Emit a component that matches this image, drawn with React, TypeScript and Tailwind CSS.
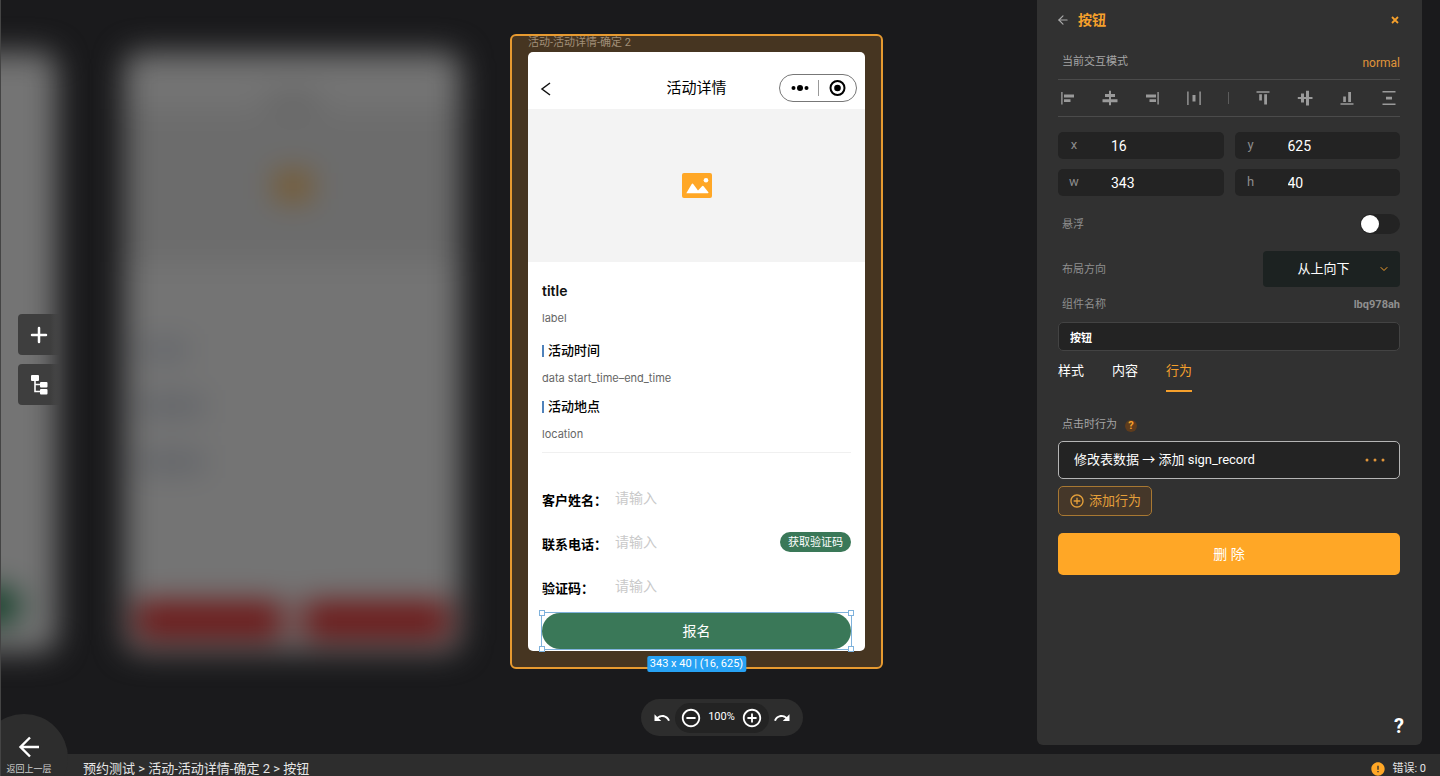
import React, { useState } from "react";
import { MdAddCircleOutline, MdError, MdRedo, MdRemoveCircleOutline, MdUndo } from "react-icons/md";
import { ArrowLeft, ChevronDown, Plus } from "lucide-react";

type AlignAction = { label: string; path: string };

const horizontalActions: AlignAction[] = [
  { label: "左对齐", path: "M1.200 2h1.400v12.500h-1.400zM4 4.500h10v3H4zM4 9.300h6.500v2.700H4z" },
  { label: "水平居中", path: "M7 .8h2V4h4v3H9v2.300h6.500v3H9v3H7v-3H.5v-3H7V7H3V4h4z" },
  { label: "右对齐", path: "M13.400 2h1.400v12.500h-1.400zM2 4.500h10v3H2zM5.500 9.300H12v2.700H5.500z" },
  { label: "水平分布", path: "M1.200 1.500h1.400v13.500h-1.400zM13.400 1.500h1.400v13.500h-1.400zM6.500 5h3v6.500h-3z" },
];

const verticalActions: AlignAction[] = [
  { label: "顶部对齐", path: "M1.500 1.200h13v1.500h-13zM4.200 4.200h2.700v6.300H4.200zM9.200 4.200H12V14.500H9.200z" },
  { label: "垂直居中", path: "M4 3.500h3V7h2V.8h3V7h3.500v2H12v6.500H9V9H7v3.500H4V9H.8V7H4z" },
  { label: "底部对齐", path: "M1.500 13.300h13v1.500h-13zM4.200 6.500h2.700V12H4.200zM9.200 2H12v10H9.200z" },
  { label: "垂直分布", path: "M1.500 1h13v1.500h-13zM1.500 13.500h13V15h-13zM5 6.700h6v2.700H5z" },
];

const tabs = ["样式", "内容", "行为"];

function TreeIcon() {
  return (
    <svg viewBox="0 0 18 20" className="h-5 w-[18px]" fill="none">
      <rect x="1" y="0" width="8" height="6" rx="1" fill="#fff" />
      <rect x="10" y="7" width="7.500" height="5.500" rx="1" fill="#fff" />
      <rect x="10" y="14" width="7.500" height="5.500" rx="1" fill="#fff" />
      <path d="M5 5v11.500h6M5 9.500h6" stroke="#fff" strokeWidth="1.600" />
    </svg>
  );
}

function PictureIcon() {
  return (
    <svg viewBox="0 0 30 25" className="h-[25px] w-[30px]">
      <rect width="30" height="25" rx="2" fill="#ffa726" />
      <circle cx="24" cy="7.300" r="2.300" fill="#fff" />
      <path
        d="M4.300 20.200L9.600 11.200q.9-1.300 1.800 0L16 17.400l4-4.200q.8-.8 1.600.1l4.800 6q.3 1-.6 1H5q-.8 0-.7-.1z"
        fill="#fff"
      />
    </svg>
  );
}

/* Out-of-focus neighbours of the selected artboard */
function BlurredBoard() {
  return (
    <div className="flex h-[600px] w-[337px] flex-col overflow-hidden rounded-2xl bg-[#747474]">
      <div className="flex h-[57px] items-end justify-center bg-[#747474]">
        <span className="h-4 w-14 rounded-full bg-[#646464]" />
      </div>
      <div className="flex h-[153px] items-center justify-center bg-[#6c6c6c]">
        <span className="h-7 w-9 bg-[#79592a]" />
      </div>
      <div className="flex flex-col gap-10 px-4 pt-20">
        <span className="h-4 w-12 bg-[#5f6268]" />
        <span className="h-4 w-16 bg-[#5c5f65]" />
        <span className="h-4 w-16 bg-[#5c5f65]" />
      </div>
      <div className="mt-auto flex gap-5 px-3 pb-3.5">
        <span className="h-9 flex-1 rounded bg-[#6c1414]" />
        <span className="h-9 flex-1 rounded bg-[#6c1414]" />
      </div>
    </div>
  );
}

function BlurredBoardEdge() {
  return (
    <div className="flex h-[600px] w-[337px] flex-col justify-end overflow-hidden rounded-2xl bg-[#747474] pr-9 pb-7 pl-3">
      <span className="h-9 rounded-full bg-[#123f28]" />
    </div>
  );
}

function SectionHeading({ children }: { children: React.ReactNode }) {
  return (
    <h3 className="flex h-[18px] items-center gap-1 text-[13px] font-medium text-black">
      <span className="h-3 w-0.5 bg-[#4f82bb]" />
      {children}
    </h3>
  );
}

function FormRow({ id, label, action }: { id: string; label: string; action?: string }) {
  return (
    <div className="flex h-11 items-center">
      <label htmlFor={id} className="w-[73px] shrink-0 pt-1 text-[13px] font-bold text-black">
        {label}
      </label>
      <input
        id={id}
        placeholder="请输入"
        className="min-w-0 flex-1 bg-transparent pb-0.5 text-sm text-black outline-none placeholder:text-[#c9c9c9]"
      />
      {action && (
        <button className="mb-0.5 h-5 rounded-full bg-[#3a7858] px-2 text-[11px] leading-5 text-white">
          {action}
        </button>
      )}
    </div>
  );
}

function Handle({ className }: { className: string }) {
  return <span className={`absolute size-1.5 border border-[#7fb2dc] bg-white ${className}`} />;
}

function SelectedBoard() {
  return (
    <section className="w-[373px] rounded-md border-2 border-[#e79a30] bg-[#463521] px-4 pb-4">
      <h2 className="h-4 text-[11px] leading-[14px] text-[#a18f78]">活动-活动详情-确定 2</h2>
      <div className="rounded-[5px] bg-white font-['Inter','Noto_Sans_CJK_SC',sans-serif]">
        <header className="grid h-[57px] grid-cols-3 items-center pt-4">
          <button aria-label="返回" className="pl-3">
            <svg viewBox="0 0 12 14" className="h-3.5 w-3" fill="none">
              <path d="M10 1L2 7l8 6" stroke="#111" strokeWidth="1.500" />
            </svg>
          </button>
          <h1 className="text-center text-[15px] text-black">活动详情</h1>
          <div className="mr-2 mb-0.5 flex h-7 w-[78px] items-center justify-center justify-self-end rounded-full border border-[#777]">
            <svg viewBox="0 0 60 20" className="h-5 w-[60px]">
              <circle cx="5.500" cy="10" r="2" />
              <circle cx="12" cy="10" r="3" />
              <circle cx="18.500" cy="10" r="2" />
              <path d="M30.500 2v16" stroke="#999" />
              <circle cx="49.500" cy="10" r="7" fill="none" stroke="#000" strokeWidth="2" />
              <circle cx="49.500" cy="10" r="3.300" />
            </svg>
          </div>
        </header>
        <div className="flex h-[153px] items-center justify-center bg-[#f3f3f3]">
          <PictureIcon />
        </div>
        <div className="flex flex-col px-3.5 pt-5">
          <h2 className="h-[18px] text-sm leading-[18px] font-semibold text-[#111]">title</h2>
          <p className="mt-2.5 mb-4 h-4 text-[11px] leading-4 text-[#666]">label</p>
          <SectionHeading>活动时间</SectionHeading>
          <p className="mt-2.5 mb-3 h-4 text-[11px] leading-4 text-[#666]">data start_time–end_time</p>
          <SectionHeading>活动地点</SectionHeading>
          <p className="mt-2.5 mb-2.5 h-4 text-[11px] leading-4 text-[#666]">location</p>
          <hr className="mb-6 border-[#f0f0f0]" />
          <FormRow id="guest-name" label="客户姓名：" />
          <FormRow id="phone" label="联系电话：" action="获取验证码" />
          <FormRow id="code" label="验证码：" />
          <div className="relative mt-1 mb-0.5 flex outline-1 outline-[#7fb2dc]">
            <button className="h-9 flex-1 rounded-full bg-[#3a7858] text-sm text-white">报名</button>
            <Handle className="-top-[3px] -left-[3px]" />
            <Handle className="-top-[3px] -right-[3px]" />
            <Handle className="-bottom-[3px] -left-[3px]" />
            <Handle className="-right-[3px] -bottom-[3px]" />
            <span className="absolute top-full left-1/2 mt-[7px] h-4 -translate-x-1/2 rounded-xs bg-[#27a2f4] px-[3px] font-[Roboto] text-[11px] leading-4 whitespace-nowrap text-white">
              343 x 40 | (16, 625)
            </span>
          </div>
        </div>
      </div>
    </section>
  );
}

function NumberField({ name, value }: { name: string; value: string }) {
  return (
    <label className="flex h-[27px] items-center rounded-[5px] bg-[#232323] text-sm text-white">
      <span className="w-8 shrink-0 text-center text-[13px] text-[#8c8c8c]">{name}</span>
      <input defaultValue={value} className="ml-[21px] w-0 min-w-0 flex-1 bg-transparent outline-none" />
    </label>
  );
}

function AlignButtons({ items }: { items: AlignAction[] }) {
  return (
    <>
      {items.map(({ label, path }) => (
        <button key={label} aria-label={label}>
          <svg viewBox="0 0 16 16" className="size-4" fill="currentColor">
            <path d={path} />
          </svg>
        </button>
      ))}
    </>
  );
}

function Inspector() {
  const [tab, setTab] = useState("行为");
  return (
    <aside className="z-10 mr-[18px] mb-[9px] flex w-[385px] shrink-0 flex-col rounded-b-md bg-[#313131] pr-[22px] pl-[21px] text-white">
      <header className="flex h-10 items-center">
        <button aria-label="返回" className="-ml-0.5">
          <ArrowLeft className="size-3.5 text-[#aaa]" />
        </button>
        <h2 className="ml-2 text-sm font-bold text-[#f5a02c]">按钮</h2>
        <button aria-label="关闭" className="ml-auto">
          <svg viewBox="0 0 10 10" className="size-2.5" stroke="#f5a02c" strokeWidth="1.800">
            <path d="M2 2l6 6M8 2L2 8" />
          </svg>
        </button>
      </header>
      <div className="flex h-10 items-center justify-between border-b border-[#4b4b4b] pt-1.5 pl-1">
        <span className="text-[11px] text-[#a5a5a5]">当前交互模式</span>
        <span className="text-xs text-[#e0953a]">normal</span>
      </div>
      <div className="flex h-[37px] items-center justify-between border-b border-[#4b4b4b] pr-[3px] pl-0.5 text-[#9a9a9a]">
        <AlignButtons items={horizontalActions} />
        <span className="h-3 w-px bg-[#5c5c5c]" />
        <AlignButtons items={verticalActions} />
      </div>
      <div className="mt-[15px] grid grid-cols-2 gap-x-[11px] gap-y-2.5">
        <NumberField name="x" value="16" />
        <NumberField name="y" value="625" />
        <NumberField name="w" value="343" />
        <NumberField name="h" value="40" />
      </div>
      <div className="mt-3.5 flex h-7 items-center justify-between pl-1">
        <label htmlFor="floating" className="pt-0.5 text-[11px] text-[#8f8f8f]">
          悬浮
        </label>
        <input
          id="floating"
          type="checkbox"
          className="flex h-5 w-10 appearance-none items-center rounded-full bg-[#232323] px-px before:size-[18px] before:rounded-full before:bg-white checked:justify-end"
        />
      </div>
      <div className="mt-[13px] flex h-9 items-center justify-between pl-1">
        <label htmlFor="direction" className="pt-0.5 text-[11px] text-[#8f8f8f]">
          布局方向
        </label>
        <div className="grid w-[137px] items-center">
          <select
            id="direction"
            className="col-start-1 row-start-1 h-9 appearance-none rounded bg-[#1c2221] pr-4 text-center text-[13px] text-white"
          >
            <option>从上向下</option>
            <option>从左向右</option>
          </select>
          <ChevronDown className="pointer-events-none col-start-1 row-start-1 mr-2.5 size-3 justify-self-end text-[#f5a02c]" />
        </div>
      </div>
      <div className="flex h-[35px] items-center justify-between pt-0.5 pl-1 text-[11px] text-[#8f8f8f]">
        <label htmlFor="component-name">组件名称</label>
        <span className="font-bold">lbq978ah</span>
      </div>
      <input
        id="component-name"
        defaultValue="按钮"
        className="h-[29px] w-full rounded-[5px] border border-[#434343] bg-[#232323] px-[11px] text-[11px] font-bold text-white outline-none"
      />
      <div role="tablist" className="flex h-[41px] gap-7">
        {tabs.map((name) => (
          <button
            key={name}
            role="tab"
            aria-selected={tab === name}
            onClick={() => setTab(name)}
            className={
              tab === name
                ? "border-b-2 border-[#f5a02c] text-[13px] text-[#f5a02c]"
                : "border-b-2 border-transparent text-[13px] text-white"
            }
          >
            {name}
          </button>
        ))}
      </div>
      <div className="mt-4 flex h-[33px] items-center gap-2 pt-0.5 pl-1 text-[11px] text-[#a5a5a5]">
        点击时行为
        <button
          aria-label="帮助"
          className="size-3 rounded-full bg-[#5e3c1d] text-center text-[11px] leading-3 font-bold text-[#f5a02c]"
        >
          ?
        </button>
      </div>
      <div className="flex h-[38px] items-center justify-between rounded-[5px] border border-[#b5b5b5] bg-[#232323] pr-3.5 pl-[15px] text-[13px]">
        <span>修改表数据 → 添加 sign_record</span>
        <button aria-label="更多">
          <svg viewBox="0 0 20 4" className="h-1 w-5" fill="#e0953a">
            <circle cx="2" cy="2" r="1.500" />
            <circle cx="10" cy="2" r="1.500" />
            <circle cx="18" cy="2" r="1.500" />
          </svg>
        </button>
      </div>
      <button className="mt-[7px] flex h-[30px] items-center gap-1 self-start rounded-[5px] border border-[#a87832] bg-[#453729] px-2.5 text-[13px] text-[#e5a03a]">
        <MdAddCircleOutline className="size-4" />
        添加行为
      </button>
      <button className="mt-[17px] h-[42px] rounded-[5px] bg-[#ffa726] text-sm text-white">删 除</button>
      <button aria-label="帮助中心" className="mt-auto -mr-1 mb-[7px] self-end text-xl leading-6 font-bold text-white">
        ?
      </button>
    </aside>
  );
}

export default function App() {
  return (
    <div
      lang="zh-CN"
      className="relative flex h-screen flex-col overflow-hidden border-l border-[#444] bg-[#1a1a1c] font-['Roboto','Noto_Sans_CJK_SC',sans-serif]"
    >
      <div className="flex min-h-0 flex-1">
        <main className="relative min-w-0 flex-1">
          <div className="absolute top-[52px] -left-[281px] blur-[15px]">
            <BlurredBoardEdge />
          </div>
          <div className="absolute top-[52px] left-[123px] blur-[15px]">
            <BlurredBoard />
          </div>
          <div className="absolute top-[34px] left-[509px]">
            <SelectedBoard />
          </div>
          <nav className="absolute top-[314px] left-[17px] flex flex-col gap-[9px] text-white">
            <button
              aria-label="添加"
              className="flex h-[41px] w-[41px] items-center justify-center rounded-l bg-linear-to-r from-[#3e3e3e] from-80% to-[#3e3e3e]/30"
            >
              <Plus className="size-6" strokeWidth={2.5} />
            </button>
            <button
              aria-label="结构"
              className="flex h-[41px] w-[41px] items-center justify-center rounded-l bg-linear-to-r from-[#3e3e3e] from-80% to-[#3e3e3e]/30"
            >
              <TreeIcon />
            </button>
          </nav>
        </main>
        <Inspector />
      </div>

      <div className="absolute bottom-10 left-1/2 ml-px flex h-[37px] w-[162px] -translate-x-1/2 items-center justify-between rounded-full bg-[#2d2d2d] px-3 text-white">
        <button aria-label="撤销">
          <MdUndo className="size-[18px]" />
        </button>
        <div className="flex h-[30px] w-[94px] items-center justify-between rounded-full bg-[#232323] px-[5px]">
          <button aria-label="缩小">
            <MdRemoveCircleOutline className="size-[22px]" />
          </button>
          <span className="text-[11px]">100%</span>
          <button aria-label="放大">
            <MdAddCircleOutline className="size-[22px]" />
          </button>
        </div>
        <button aria-label="重做">
          <MdRedo className="size-[18px]" />
        </button>
      </div>

      <footer className="relative flex h-[22px] shrink-0 items-start justify-between bg-[#2d2d2d] pr-3.5 pl-[82px] text-[#e6e6e6]">
        <button className="absolute -top-10 -left-[21px] flex h-[88px] w-[88px] flex-col items-center rounded-full bg-[#2d2d2d] pt-[21px] pl-2.5 text-white">
          <svg viewBox="0 0 22 24" className="h-6 w-[22px]" fill="none" stroke="#fff" strokeWidth="2.400">
            <path d="M12 2.500L2.500 12l9.500 9.500M2.500 12H21" />
          </svg>
          <span className="mt-1 text-[9px] leading-3 text-[#d0d0d0]">返回上一层</span>
        </button>
        <nav className="pt-[5px] text-[13px] leading-5">预约测试 &gt; 活动-活动详情-确定 2 &gt; 按钮</nav>
        <div className="flex items-center gap-1.5 pt-[5px] text-[11px] leading-5">
          <MdError className="size-4 text-[#ffa726]" />
          错误: 0
        </div>
      </footer>
    </div>
  );
}
